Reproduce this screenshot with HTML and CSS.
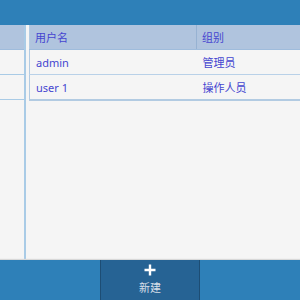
FILE: index.html
```html
<!doctype html>
<html lang="zh">
<head>
  <meta charset="utf-8">
  <title>用户管理</title>
  <link rel="stylesheet" href="styles.css">
</head>
<body>
  <div class="topbar"></div>
  <div class="main">
    <div class="side">
      <div class="side-head"></div>
      <div class="side-row"></div>
      <div class="side-row"></div>
    </div>
    <div class="content">
      <table class="users" cellpadding="0" cellspacing="0">
        <tr class="head">
          <th class="col-name">用户名</th>
          <th>组别</th>
        </tr>
        <tr>
          <td class="col-name">admin</td>
          <td>管理员</td>
        </tr>
        <tr>
          <td class="col-name">user 1</td>
          <td>操作人员</td>
        </tr>
      </table>
    </div>
  </div>
  <div class="bottombar">
    <button class="btn-new">
      <svg width="12" height="12" viewBox="0 0 12 12"><path d="M6 0.5V11.5M0.5 6H11.5" stroke="#fff" stroke-width="2.4" fill="none"/></svg>
      <span>新建</span>
    </button>
  </div>
</body>
</html>
```

FILE: styles.css
```css
body {
  margin: 0px;
  width: 300px;
  height: 300px;
  display: flex;
  flex-direction: column;
  background: #f5f5f5;
  font-family: "Noto Sans", "Noto Sans CJK SC", sans-serif;
  font-size: 11px;
  overflow: hidden;
}

.topbar {
  height: 25px;
  flex: none;
  background: #2e80b8;
}

.main {
  flex: 1;
  display: flex;
  min-height: 0;
}

.side {
  width: 24px;
  flex: none;
  border-right: 2px solid #a9cbe6;
}

.side-head {
  height: 24px;
  background: #b0c4de;
  border-bottom: 1px solid #9fbcdc;
}

.side-row {
  height: 24px;
  border-bottom: 1px solid #a9cbe6;
}

.content {
  flex: 1;
  padding-left: 3px;
  overflow: hidden;
}

.users {
  width: 290px;
  border-collapse: collapse;
  border-left: 1px solid #b2cbe2;
  border-bottom: 2px solid #b2cbe2;
  color: #4545d0;
}

.users th,
.users td {
  height: 24px;
  padding: 0 0 0 5px;
  text-align: left;
  font-weight: normal;
  border-bottom: 1px solid #b9d1e8;
}

.users td {
  background: #f5f5f5;
  padding-left: 6px;
}

.users .head th {
  background: #b0c4de;
  border-bottom: 1px solid #9fbcdc;
}

.users th.col-name {
  width: 161px;
  border-right: 1px solid #97b2d2;
}

.bottombar {
  height: 40px;
  flex: none;
  display: flex;
  justify-content: center;
  background: #2e80b8;
  box-shadow: 0 -1px 1px #d8d8d8;
}

.btn-new {
  width: 100px;
  height: 40px;
  padding: 4px 0 0 0;
  display: flex;
  flex-direction: column;
  align-items: center;
  gap: 3px;
  background: #266394;
  border: none;
  border-left: 1px solid #1d4d74;
  border-right: 1px solid #1d4d74;
  color: #d6dfe8;
  font-family: "Noto Sans CJK SC", sans-serif;
  font-size: 11px;
  box-sizing: border-box;
}
```
